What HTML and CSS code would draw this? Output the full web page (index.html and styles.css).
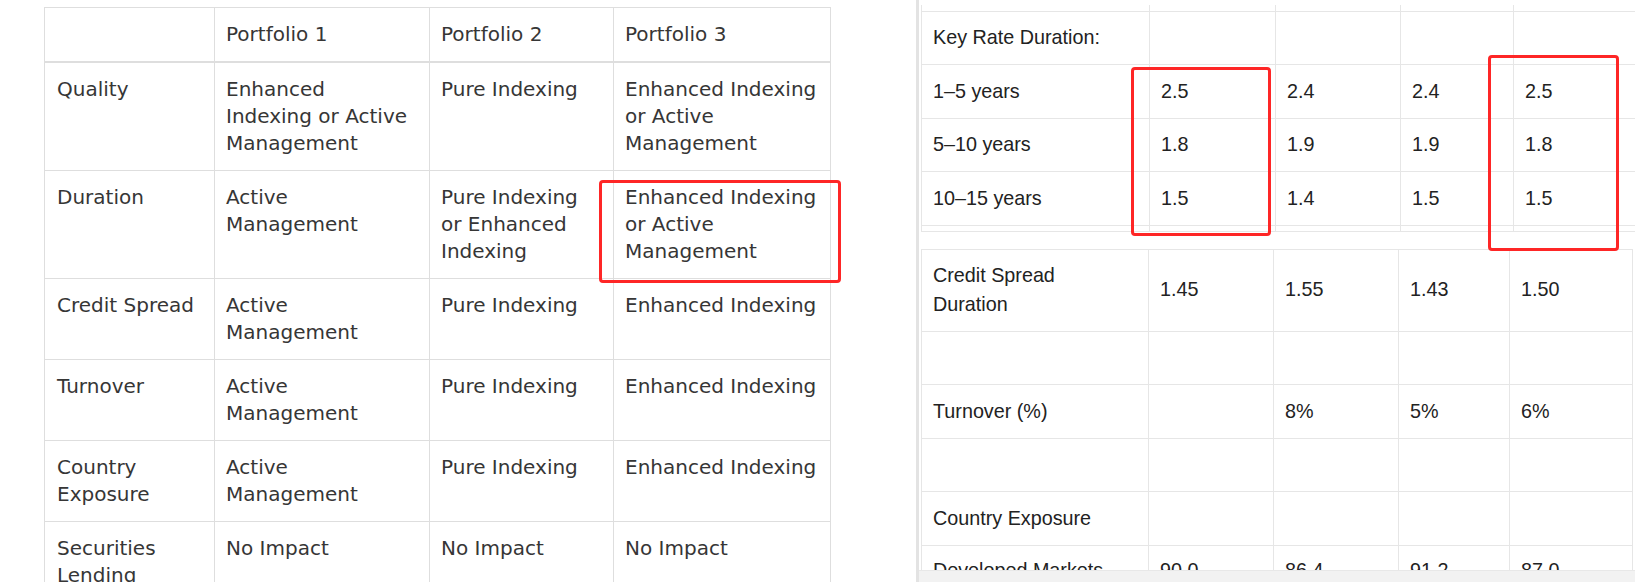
FILE: index.html
```html
<!DOCTYPE html>
<html lang="en">
<head>
<meta charset="utf-8">
<title>Portfolio comparison</title>
<link rel="stylesheet" href="styles.css">
</head>
<body>
<div class="page">
  <section class="pane pane-left">
    <table class="cmp">
      <thead>
        <tr>
          <th class="w1"></th>
          <th class="w2">Portfolio 1</th>
          <th class="w3">Portfolio 2</th>
          <th class="w4">Portfolio 3</th>
        </tr>
      </thead>
      <tbody>
        <tr><td>Quality</td><td>Enhanced Indexing or Active Management</td><td>Pure Indexing</td><td>Enhanced Indexing or Active Management</td></tr>
        <tr><td>Duration</td><td>Active Management</td><td>Pure Indexing or Enhanced Indexing</td><td>Enhanced Indexing or Active Management</td></tr>
        <tr><td>Credit Spread</td><td>Active Management</td><td>Pure Indexing</td><td>Enhanced Indexing</td></tr>
        <tr><td>Turnover</td><td>Active Management</td><td>Pure Indexing</td><td>Enhanced Indexing</td></tr>
        <tr><td>Country Exposure</td><td>Active Management</td><td>Pure Indexing</td><td>Enhanced Indexing</td></tr>
        <tr><td>Securities Lending</td><td>No Impact</td><td>No Impact</td><td>No Impact</td></tr>
      </tbody>
    </table>
  </section>

  <section class="pane pane-right">
    <div class="viewport">
      <table class="kr kr-a">
        <tbody>
          <tr class="stub"><td class="k1"></td><td class="k2"></td><td class="k3"></td><td class="k4"></td><td class="k5"></td></tr>
          <tr><td>Key Rate Duration:</td><td></td><td></td><td></td><td></td></tr>
          <tr><td>1–5 years</td><td>2.5</td><td>2.4</td><td>2.4</td><td>2.5</td></tr>
          <tr><td>5–10 years</td><td>1.8</td><td>1.9</td><td>1.9</td><td>1.8</td></tr>
          <tr><td>10–15 years</td><td>1.5</td><td>1.4</td><td>1.5</td><td>1.5</td></tr>
          <tr class="thin"><td></td><td></td><td></td><td></td><td></td></tr>
        </tbody>
      </table>
      <table class="kr kr-b">
        <tbody>
          <tr><td class="j1">Credit Spread Duration</td><td class="j2">1.45</td><td class="j3">1.55</td><td class="j4">1.43</td><td class="j5">1.50</td></tr>
          <tr class="blank"><td></td><td></td><td></td><td></td><td></td></tr>
          <tr><td>Turnover (%)</td><td></td><td>8%</td><td>5%</td><td>6%</td></tr>
          <tr class="blank"><td></td><td></td><td></td><td></td><td></td></tr>
          <tr><td>Country Exposure</td><td></td><td></td><td></td><td></td></tr>
          <tr class="last"><td>Developed Markets</td><td>90.0</td><td>86.4</td><td>91.2</td><td>87.0</td></tr>
        </tbody>
      </table>
    </div>
    <div class="hbar"></div>
  </section>

  <div class="mark mark-a"></div>
  <div class="mark mark-b"></div>
  <div class="mark mark-c"></div>
</div>
</body>
</html>
```

FILE: styles.css
```css
html, body {
  margin: 0;
  padding: 0;
  background: #ffffff;
  overflow: hidden;
}

.page {
  position: relative;
  display: flex;
  width: 1635px;
  height: 582px;
  overflow: hidden;
}

.pane {
  height: 582px;
  overflow: hidden;
  box-sizing: border-box;
}

/* ---------- left screenshot ---------- */
.pane-left {
  flex: 0 0 916px;
  padding: 7px 0 0 44px;
}

.cmp {
  border-collapse: separate;
  border-spacing: 0;
  table-layout: fixed;
  width: 787px;
  border-top: 1px solid #dedede;
  border-left: 1px solid #dedede;
  font-family: "DejaVu Sans", sans-serif;
  font-size: 20px;
  line-height: 27px;
  color: #363636;
}

.cmp th,
.cmp td {
  box-sizing: border-box;
  padding: 13px 12px 13px 11px;
  border-right: 1px solid #dedede;
  border-bottom: 1px solid #dedede;
  vertical-align: top;
  text-align: left;
  font-weight: normal;
}

.cmp th {
  border-bottom-width: 2px;
}

.cmp tr > :first-child {
  padding-left: 12px;
}

.w1 { width: 170px; }
.w2 { width: 215px; }
.w3 { width: 184px; }
.w4 { width: 217px; }

/* ---------- right screenshot ---------- */
.pane-right {
  flex: 1 1 auto;
  display: flex;
  flex-direction: column;
  border-left: 3px solid #e3e3e3;
}

.viewport {
  flex: 1 1 auto;
  overflow: hidden;
  padding: 5px 0 0 2px;
}

.hbar {
  flex: 0 0 12px;
  background: #f2f2f2;
  border-top: 1px solid #e8e8e8;
  box-sizing: border-box;
}

.kr {
  border-collapse: separate;
  border-spacing: 0;
  table-layout: fixed;
  border-left: 1px solid #e6e6e6;
  font-family: "Liberation Sans", Arial, sans-serif;
  font-size: 19.75px;
  line-height: 28.5px;
  color: #222222;
}

.kr td {
  box-sizing: border-box;
  padding: 11.2px 12px 12.8px 11px;
  border-right: 1px solid #e6e6e6;
  border-bottom: 1px solid #e6e6e6;
  vertical-align: middle;
  white-space: normal;
}

.kr tr > td:first-child {
  padding-right: 22px;
}

.kr-a { width: 718px; }
.k1 { width: 228px; }
.k2 { width: 126px; }
.k3 { width: 125px; }
.k4 { width: 113px; }
.k5 { width: 125px; }

.kr .stub td {
  padding: 0;
  height: 7px;
}

.kr .thin td {
  padding: 0;
  height: 6px;
}

.kr-b {
  width: 712px;
  margin-top: 17px;
  border-top: 1px solid #e6e6e6;
}
.j1 { width: 227px; }
.j2 { width: 125px; }
.j3 { width: 125px; }
.j4 { width: 111px; }
.j5 { width: 123px; }

.kr .blank td {
  height: 53.5px;
}

.kr .last td {
  padding-top: 10px;
}

/* ---------- annotation boxes ---------- */
.mark {
  position: absolute;
  box-sizing: border-box;
  border: 3px solid #fe2626;
  border-radius: 4px;
  pointer-events: none;
}

.mark-a { left: 599px; top: 180px; width: 242px; height: 103px; }
.mark-b { left: 1131px; top: 67px; width: 140px; height: 169px; }
.mark-c { left: 1488px; top: 55px; width: 131px; height: 196px; }
```
